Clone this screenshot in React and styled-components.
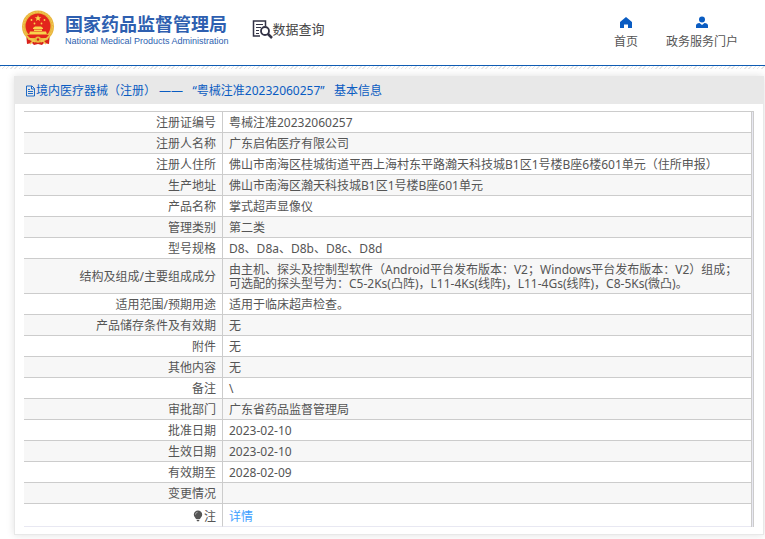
import React from "react";
import styled, { createGlobalStyle } from "styled-components";

const GlobalStyle = createGlobalStyle`
  * {
    box-sizing: border-box;
  }

  body {
    margin: 0;
    background-color: #fff;
    color: #555;
    font-family: "Noto Sans", "Noto Sans CJK SC", sans-serif;
    font-size: 12px;
    line-height: 14px;
  }
`;

const Header = styled.header`
  display: flex;
  align-items: flex-start;
  height: 66px;
  padding: 10px 27px 0 21px;
  border-bottom: 1px solid #0f5cb3;
`;

const Hatch = styled.div`
  height: 3px;
  background: repeating-linear-gradient(135deg, #e6e6e6 0 1px, #fff 1px 3px);
`;

const Brand = styled.a`
  display: flex;
  gap: 10px;
  color: #2e5fb0;
  text-decoration: none;
`;

const BrandText = styled.span`
  display: flex;
  flex-direction: column;
  padding-top: 3px;
`;

const BrandName = styled.span`
  font-family: "Noto Sans CJK SC", sans-serif;
  font-size: 18px;
  font-weight: 700;
  line-height: 20px;
  white-space: nowrap;
`;

const BrandSubtitle = styled.span`
  font-family: "Liberation Sans", sans-serif;
  font-size: 9px;
  line-height: 16px;
  white-space: nowrap;
`;

const Section = styled.div`
  display: flex;
  align-items: center;
  margin: 9px 0 0 23px;
  color: #444;
  font-size: 13px;
  line-height: 20px;
  white-space: nowrap;
`;

const Nav = styled.nav`
  display: flex;
  gap: 28px;
  margin-left: auto;
  padding-top: 5px;
`;

const NavLink = styled.a`
  display: flex;
  flex-direction: column;
  align-items: center;
  gap: 6px;
  color: #555;
  text-decoration: none;
  white-space: nowrap;
`;

const Panel = styled.main`
  margin: 7px 1px 12px 14px;
  background-color: #fff;
  border: 1px solid #e8e8e8;
  border-top: 0;
  box-shadow: 0 0 8px rgba(0, 0, 0, 0.12);
`;

const PanelTitle = styled.h1`
  display: flex;
  align-items: center;
  height: 28px;
  margin: 0;
  padding: 2px 10px 0;
  background-color: #e8e8e8;
  color: #0a5cc2;
  font-size: 12px;
  font-weight: 400;
`;

const TableFrame = styled.div`
  margin: 7px 9px;
  padding-right: 1px;
  background-color: #e8e8f2;
  border-top: 1px solid #ccc;
  border-right: 1px solid #ccc;
`;

const Table = styled.table`
  width: 100%;
  border-collapse: separate;
  border-spacing: 0;
  border-right: 1px solid #ccc;
  background-color: #fff;
`;

const Row = styled.tr`
  background-color: #fff;

  &:nth-child(even) {
    background-color: #f7f7f7;
  }

  > * {
    padding: ${(props) => (props.$last ? "6px 6px 2px" : "4px 6px 2px")};
    border-bottom: 1px solid ${(props) => (props.$last ? "#e8e8f2" : "#ccc")};
  }
`;

const Label = styled.th`
  width: 199px;
  height: 21px;
  border-right: 1px solid #ccc;
  font-weight: 400;
  text-align: right;

  svg {
    margin-right: 1px;
    vertical-align: -1px;
  }
`;

const Value = styled.td`
  text-align: left;
`;

const DetailLink = styled.a`
  color: #409eff;
  text-decoration: none;
`;

const rows = [
  ["注册证编号", "粤械注准20232060257"],
  ["注册人名称", "广东启佑医疗有限公司"],
  [
    "注册人住所",
    "佛山市南海区桂城街道平西上海村东平路瀚天科技城B1区1号楼B座6楼601单元（住所申报）",
  ],
  ["生产地址", "佛山市南海区瀚天科技城B1区1号楼B座601单元"],
  ["产品名称", "掌式超声显像仪"],
  ["管理类别", "第二类"],
  ["型号规格", "D8、D8a、D8b、D8c、D8d"],
  [
    "结构及组成/主要组成成分",
    "由主机、探头及控制型软件（Android平台发布版本：V2；Windows平台发布版本：V2）组成；可选配的探头型号为：C5-2Ks(凸阵)，L11-4Ks(线阵)，L11-4Gs(线阵)，C8-5Ks(微凸)。",
  ],
  ["适用范围/预期用途", "适用于临床超声检查。"],
  ["产品储存条件及有效期", "无"],
  ["附件", "无"],
  ["其他内容", "无"],
  ["备注", "\\"],
  ["审批部门", "广东省药品监督管理局"],
  ["批准日期", "2023-02-10"],
  ["生效日期", "2023-02-10"],
  ["有效期至", "2028-02-09"],
  ["变更情况", ""],
];

function Emblem() {
  return (
    <svg width="34" height="36" viewBox="0 0 34 36" aria-hidden="true">
      <path d="M5 23l1 11 5-1 2 2 4-1 4 1 2-2 5 1 1-11z" fill="#d9231c" />
      <circle cx="17" cy="16.500" r="16" fill="#e9b63c" />
      <circle
        cx="17"
        cy="16.500"
        r="14.500"
        fill="none"
        stroke="#f3c95a"
        strokeWidth="1"
        strokeDasharray="2 1"
      />
      <circle cx="17" cy="16" r="12.500" fill="#e3241c" />
      <path
        d="M17 5l.9 2.200 2.400.1-1.900 1.500.7 2.300-2.100-1.300-2.100 1.300.7-2.300-1.900-1.500 2.400-.1z"
        fill="#f8d34d"
      />
      <g fill="#f8d34d">
        <circle cx="10.500" cy="10" r=".9" />
        <circle cx="23.500" cy="10" r=".9" />
        <circle cx="13.500" cy="13.500" r=".9" />
        <circle cx="20.500" cy="13.500" r=".9" />
        <path d="M12 18l2-1.500h6l2 1.500v1H12zM13 19.500h8V21h-8zM9 21.500h16l1 3H8z" />
      </g>
      <path d="M6 25h22l-3 3H9z" fill="#e3241c" />
      <circle cx="17" cy="29.500" r="3" fill="#e9b63c" />
      <circle cx="17" cy="29.500" r="1.200" fill="#d9231c" />
      <path
        d="M7 29c3-1 5 0 7 3M27 29c-3-1-5 0-7 3M9 34l3-3M25 34l-3-3"
        fill="none"
        stroke="#f1c64f"
        strokeWidth="1.500"
      />
    </svg>
  );
}

function SearchDocIcon() {
  return (
    <svg
      width="21"
      height="20"
      viewBox="0 0 21 20"
      fill="none"
      stroke="#333346"
      aria-hidden="true"
    >
      <path d="M13.500 7V2H1.500v15H8" strokeWidth="1.500" />
      <path d="M4 5.500h7M4 8.500h5M4 11.500h3M4 14.500h3" />
      <circle cx="13" cy="12" r="4" strokeWidth="1.800" />
      <path d="M16 15l4 4" strokeWidth="2.500" />
    </svg>
  );
}

function HomeIcon() {
  return (
    <svg width="12" height="14" viewBox="0 0 12 14" fill="#0a5cc2" aria-hidden="true">
      <path d="M6 2l6 5v6H8V9.500H4V13H0V7z" />
    </svg>
  );
}

function UserIcon() {
  return (
    <svg width="12" height="14" viewBox="0 0 12 14" fill="#0a5cc2" aria-hidden="true">
      <circle cx="6" cy="4.500" r="3" />
      <path d="M0 13v-2.500C0 9 1.500 8 3.500 8L6 10l2.500-2C10.500 8 12 9 12 10.500V13z" />
    </svg>
  );
}

function DocIcon() {
  return (
    <svg
      width="11"
      height="12"
      viewBox="0 0 11 12"
      fill="none"
      stroke="#0a5cc2"
      strokeWidth=".9"
      aria-hidden="true"
    >
      <path d="M1.500 1H7l2.500 2.500V11h-8zM6.500 1v3h3M3 6.500h5M3 8.500h5M3 4.500h2" />
    </svg>
  );
}

function BulbIcon() {
  return (
    <svg width="10" height="12" viewBox="0 0 10 12" aria-hidden="true">
      <path
        d="M5 .5a4.200 4.200 0 0 1 4.200 4.200C9.200 6.500 7.500 7.500 7 9H3C2.500 7.500.8 6.500.8 4.700A4.200 4.200 0 0 1 5 .5zM3.500 9.700h3L6 11.200H4z"
        fill="#555"
      />
      <path d="M2.500 4.500c.1-1.200.8-2 2-2.200" fill="none" stroke="#ddd" strokeWidth=".7" />
    </svg>
  );
}

export default function App() {
  return (
    <>
      <GlobalStyle />
      <Header>
        <Brand href="#">
          <Emblem />
          <BrandText>
            <BrandName>国家药品监督管理局</BrandName>
            <BrandSubtitle>National Medical Products Administration</BrandSubtitle>
          </BrandText>
        </Brand>
        <Section>
          <SearchDocIcon />
          数据查询
        </Section>
        <Nav>
          <NavLink href="#">
            <HomeIcon />
            首页
          </NavLink>
          <NavLink href="#">
            <UserIcon />
            政务服务门户
          </NavLink>
        </Nav>
      </Header>
      <Hatch />
      <Panel>
        <PanelTitle>
          <DocIcon />
          境内医疗器械（注册） ——{"\u00a0\u00a0\u00a0"}“粤械注准20232060257”
          {"\u00a0\u00a0\u00a0"}基本信息
        </PanelTitle>
        <TableFrame>
          <Table>
            <tbody>
              {rows.map(([label, value]) => (
                <Row key={label}>
                  <Label scope="row">{label}</Label>
                  <Value>{value}</Value>
                </Row>
              ))}
              <Row $last>
                <Label scope="row">
                  <BulbIcon />注
                </Label>
                <Value>
                  <DetailLink href="#">详情</DetailLink>
                </Value>
              </Row>
            </tbody>
          </Table>
        </TableFrame>
      </Panel>
    </>
  );
}
